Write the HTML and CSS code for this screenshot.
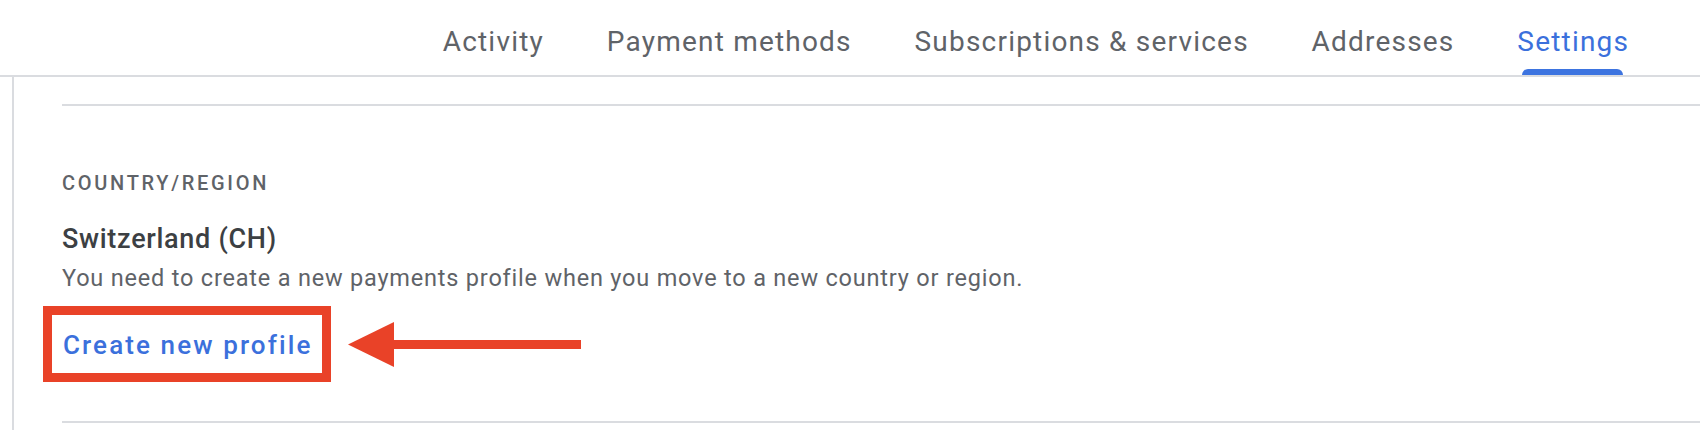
FILE: index.html
```html
<!DOCTYPE html>
<html lang="en">
<head>
<meta charset="utf-8">
<title>Payments settings</title>
<link rel="stylesheet" href="styles.css">
</head>
<body>
<header class="tabs">
  <a class="tab"><span class="tab-label">Activity</span><span class="tab-bar"></span></a>
  <a class="tab"><span class="tab-label">Payment methods</span><span class="tab-bar"></span></a>
  <a class="tab"><span class="tab-label">Subscriptions &amp; services</span><span class="tab-bar"></span></a>
  <a class="tab"><span class="tab-label">Addresses</span><span class="tab-bar"></span></a>
  <a class="tab active"><span class="tab-label">Settings</span><span class="tab-bar"></span></a>
</header>
<main class="main">
  <section class="section">
    <div class="label">COUNTRY/REGION</div>
    <div class="title">Switzerland (CH)</div>
    <div class="desc">You need to create a new payments profile when you move to a new country or region.</div>
    <div class="action-row">
      <div class="highlight"><a class="link">Create new profile</a></div>
      <svg class="arrow" width="233" height="45" viewBox="0 0 233 45" aria-hidden="true">
        <polygon points="0,22.5 46,0 46,45" fill="#e94228"/>
        <rect x="45" y="18" width="188" height="9" fill="#e94228"/>
      </svg>
    </div>
  </section>
</main>
</body>
</html>
```

FILE: styles.css
```css
* { box-sizing: border-box; }
html, body { margin: 0; padding: 0; background: #ffffff; }
body { font-family: Roboto, "Noto Sans", Arial, sans-serif; width: 1700px; height: 430px; overflow: hidden; }

.tabs {
  display: flex;
  justify-content: flex-end;
  height: 77px;
  border-bottom: 2px solid #dadce0;
  padding-right: 40px;
}
.tab {
  display: flex;
  flex-direction: column;
  align-items: center;
  padding: 26px 32px 0;
  color: #5f6368;
  font-size: 28px;
  line-height: 32px;
  letter-spacing: 1.2px;
  cursor: pointer;
}
.tab-label { white-space: nowrap; margin-right: -1.2px; }
.tab-bar {
  margin-top: 11px;
  height: 6px;
  width: calc(100% - 10px);
  border-radius: 6px 6px 0 0;
  background: transparent;
}
.tab.active { color: #3b70dc; }
.tab.active .tab-bar { background: #3d74e0; }

.main {
  margin-left: 12px;
  border-left: 2px solid #dadce0;
  padding: 27px 0 0 48px;
  height: 353px;
}
.section {
  border-top: 2px solid #dadce0;
  border-bottom: 2px solid #dadce0;
  padding: 65px 0 39px;
}
.label {
  font-size: 20px;
  line-height: 24px;
  font-weight: 500;
  letter-spacing: 2.7px;
  color: #5f6368;
}
.title {
  margin-top: 29px;
  font-size: 27px;
  line-height: 30px;
  font-weight: 500;
  letter-spacing: 0.7px;
  color: #3c4043;
}
.desc {
  margin-top: 10px;
  font-size: 23.5px;
  line-height: 28px;
  letter-spacing: 0.8px;
  color: #5f6368;
}
.action-row {
  margin-top: 14px;
  margin-left: -19px;
  display: flex;
  align-items: center;
  gap: 17px;
}
.highlight {
  border: 9px solid #e94228;
  padding: 15px 12px 13px 11px;
}
.link {
  display: block;
  font-size: 26px;
  line-height: 30px;
  font-weight: 500;
  letter-spacing: 2.1px;
  margin-right: -2.1px;
  color: #3b70dc;
  white-space: nowrap;
  cursor: pointer;
}
.arrow { display: block; }
```
